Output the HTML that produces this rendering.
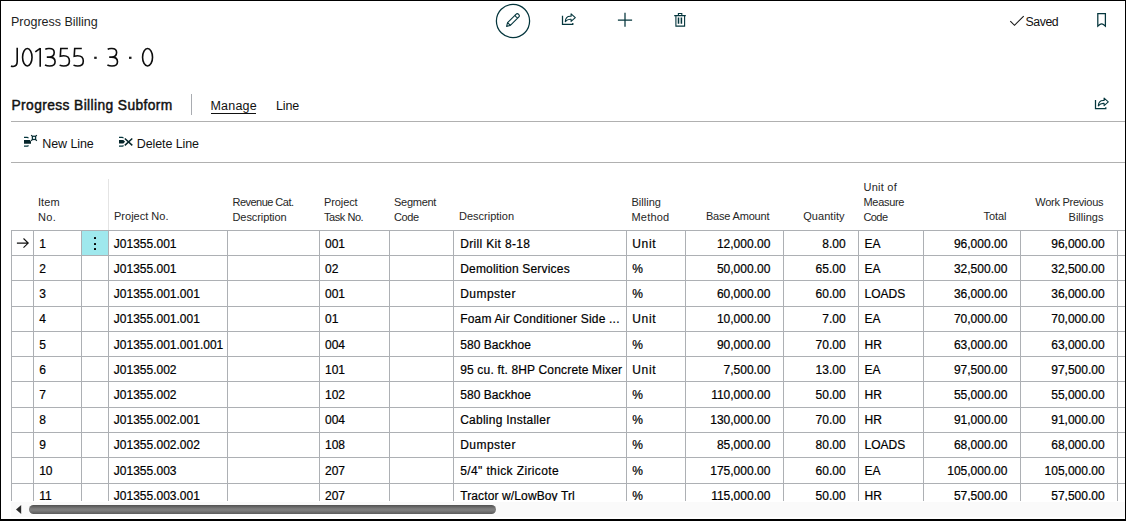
<!DOCTYPE html><html><head><meta charset="utf-8"><style>
*{margin:0;padding:0;box-sizing:border-box}
html,body{width:1126px;height:521px;overflow:hidden;background:#fff}
body{position:relative;font-family:"Liberation Sans",sans-serif;color:#111}
.a{position:absolute;white-space:nowrap;line-height:1}
.hl{position:absolute;height:1px;background:#adb0b4}
.vl{position:absolute;width:1px;background:#adb0b4}
.c{position:absolute;white-space:nowrap;font-size:12.0px;line-height:1;color:#000;-webkit-text-stroke:0.2px #000}
.hd{position:absolute;white-space:nowrap;font-size:11px;line-height:15px;color:#262626}
.r{text-align:right}
</style></head><body>
<div style="position:absolute;left:0;top:0;width:1126px;height:521px;border-top:1px solid #000;border-left:1px solid #000;border-right:1px solid #000;border-bottom:2px solid #000;z-index:50"></div>
<div id="t_pb" class="a" style="left:11px;top:16.3px;font-size:12.5px;color:#1e1e1e;letter-spacing:-0.007px;">Progress Billing</div>
<svg class="a" style="left:0;top:40px" width="170" height="32" viewBox="0 40 170 32"><g stroke="#0d0d0d" stroke-width="1.6" fill="none"><path d="M17.2 47.8 V61.6 C17.2 65.2 15.7 66.45 13.1 66.45 C12.2 66.45 11.5 66.25 11 65.95"/><ellipse cx="27.3" cy="57.25" rx="4.73" ry="8.72" fill="none"/><path d="M40.2 47.9 V66.7 M35.3 51.9 L40.2 48.4"/><path transform="translate(45.00 47.8)" d="M0.3 1.5 C1.4 0.6 2.9 0.75 4.5 0.75 C7.6 0.75 9.2 2.3 9.2 4.8 C9.2 7.6 7.2 9.3 4.2 9.3 H1.8 M4.2 9.3 C7.9 9.3 10.1 11.2 10.1 13.9 C10.1 16.9 7.9 18.2 4.6 18.2 C2.8 18.2 1.2 17.8 0 17.2" fill="none"/><path transform="translate(59.60 47.8)" d="M8.3 0.75 H1.2 L0.7 8.4 C1.7 8.1 2.8 7.9 4 7.9 C7.6 7.9 9.8 10 9.8 13.1 C9.8 16.3 7.6 18.2 4.2 18.2 C2.6 18.2 1.2 17.9 0 17.3" fill="none"/><path transform="translate(73.50 47.8)" d="M8.3 0.75 H1.2 L0.7 8.4 C1.7 8.1 2.8 7.9 4 7.9 C7.6 7.9 9.8 10 9.8 13.1 C9.8 16.3 7.6 18.2 4.2 18.2 C2.6 18.2 1.2 17.9 0 17.3" fill="none"/><path transform="translate(107.40 47.8)" d="M0.3 1.5 C1.4 0.6 2.9 0.75 4.5 0.75 C7.6 0.75 9.2 2.3 9.2 4.8 C9.2 7.6 7.2 9.3 4.2 9.3 H1.8 M4.2 9.3 C7.9 9.3 10.1 11.2 10.1 13.9 C10.1 16.9 7.9 18.2 4.6 18.2 C2.8 18.2 1.2 17.8 0 17.2" fill="none"/><ellipse cx="147.55" cy="57.25" rx="4.98" ry="8.72" fill="none"/></g><rect x="94.2" y="56.7" width="2.5" height="2.2" fill="#1a1a1a"/><rect x="129" y="56.7" width="2.5" height="2.2" fill="#1a1a1a"/></svg>
<svg class="a" style="left:0;top:0" width="1126" height="45" viewBox="0 0 1126 45">
<circle cx="513" cy="21" r="16.6" fill="none" stroke="#05363d" stroke-width="1.25"/>
<g transform="translate(506.6 26.4) rotate(-45)">
<path d="M0 0 L3.3 -1.95 H15.1 A1.95 1.95 0 0 1 15.1 1.95 H3.3 Z M3.3 -1.95 V1.95 M14.3 -1.95 A0.8 1.95 0 0 0 14.3 1.95" fill="none" stroke="#05363d" stroke-width="1.1" stroke-linejoin="round"/>
</g>
<path d="M562.5 15.8 V24.3 H572.8 V23" fill="none" stroke="#05363d" stroke-width="1.25"/>
<path d="M565.3 21.6 C565.5 18.2 567.2 16.3 570.2 16.3 H571.1 V13.9 L575.3 17.7 L571.1 21.4 V19.2 H570.2 C567.7 19.2 566.4 20.3 565.3 21.6 Z" fill="none" stroke="#05363d" stroke-width="1.1" stroke-linejoin="round"/>
<path d="M625 12.8 V26.8 M617.9 20 H632.1" stroke="#05363d" stroke-width="1.25"/>
<path d="M674.2 15.6 H685.8 M678.4 15.6 V13.5 H681.8 V15.6 M675.9 15.6 V26.1 H684.6 V15.6" fill="none" stroke="#05363d" stroke-width="1.1"/>
<path d="M678.5 17.6 V23.8 M681.4 17.6 V23.8" stroke="#05363d" stroke-width="1.5"/>
<path d="M1010.3 21.2 L1014.5 25.3 L1023.7 16.1" fill="none" stroke="#1a1a1a" stroke-width="1.15"/>
<path d="M1097.8 13.6 H1105.4 V26.2 L1103.4 24.6 Q1101.6 23.2 1099.8 24.6 L1097.8 26.2 Z" fill="none" stroke="#05363d" stroke-width="1.25" stroke-linejoin="miter"/>
</svg>
<div id="t_saved" class="a" style="left:1025.5px;top:15.7px;font-size:12.3px;color:#111;letter-spacing:-0.425px;">Saved</div>
<div id="t_sub" class="a" style="left:11.5px;top:98.6px;font-size:13.8px;color:#111;-webkit-text-stroke:0.45px #111;letter-spacing:0.391px;">Progress Billing Subform</div>
<div style="position:absolute;left:191px;top:94px;width:1px;height:21px;background:#a9acb1"></div>
<div id="t_manage" class="a" style="left:210.5px;top:100px;font-size:12.5px;color:#111;letter-spacing:0.200px;">Manage</div>
<div style="position:absolute;left:211px;top:113px;width:45px;height:1.3px;background:#111"></div>
<div id="t_line" class="a" style="left:276px;top:100px;font-size:12.5px;color:#111;letter-spacing:-0.167px;">Line</div>
<svg class="a" style="left:1088px;top:92px" width="24" height="22" viewBox="1088 92 24 22">
<path d="M1095.5 100 V108.5 H1105.8 V107.2" fill="none" stroke="#05363d" stroke-width="1.25"/>
<path d="M1098.3 105.8 C1098.5 102.4 1100.2 100.5 1103.2 100.5 H1104.1 V98.1 L1108.3 101.9 L1104.1 105.6 V103.4 H1103.2 C1100.7 103.4 1099.4 104.5 1098.3 105.8 Z" fill="none" stroke="#05363d" stroke-width="1.1" stroke-linejoin="round"/>
</svg>
<div class="hl" style="left:11px;top:121px;width:1114px;background:#b0b0b0"></div>
<svg class="a" style="left:18px;top:128px" width="120" height="24" viewBox="18 128 120 24">
<path d="M24 137.4 H27.2 Q28.2 137.4 28.2 138.3" fill="none" stroke="#05363d" stroke-width="1.3"/>
<path d="M24 146.2 H27.2 Q28.2 146.2 28.2 145.3" fill="none" stroke="#05363d" stroke-width="1.3"/>
<path d="M24 140 H29.8 L31 141.2 V143.7 H24 Z" fill="#06252a"/>
<circle cx="34" cy="137.9" r="1.75" fill="none" stroke="#05363d" stroke-width="1.3"/>
<path d="M31.2 135.1 L32.8 136.7 M36.8 135.1 L35.2 136.7 M31.2 140.7 L32.8 139.1 M36.8 140.7 L35.2 139.1" stroke="#06252a" stroke-width="1.3"/>
<path d="M119 137.3 H122.3 Q123.2 137.3 123.2 138.2" fill="none" stroke="#05363d" stroke-width="1.3"/>
<path d="M119 146.2 H122.3 Q123.2 146.2 123.2 145.3" fill="none" stroke="#05363d" stroke-width="1.3"/>
<path d="M119 140 H123.3 L125.1 141.8 L123.3 143.6 H119 Z" fill="#06252a"/>
<path d="M124.8 138.5 L132.3 145.4 M132.3 138.5 L124.8 145.4" stroke="#06252a" stroke-width="1.5"/>
</svg>
<div id="t_new" class="a" style="left:42.3px;top:138.2px;font-size:12.5px;color:#111;letter-spacing:-0.100px;">New Line</div>
<div id="t_del" class="a" style="left:136.8px;top:138.2px;font-size:12.5px;color:#111;letter-spacing:-0.110px;">Delete Line</div>
<div class="hl" style="left:11px;top:162px;width:1114px;background:#b0b0b0"></div>
<div id="h_item_0" class="hd" style="left:38px;top:194.5px;letter-spacing:0.067px;">Item</div>
<div id="h_item_1" class="hd" style="left:38px;top:209.5px;letter-spacing:0.350px;">No.</div>
<div id="h_proj_0" class="hd" style="left:114px;top:208.7px;letter-spacing:0.010px;">Project No.</div>
<div id="h_rev_0" class="hd" style="left:232.5px;top:194.5px;letter-spacing:-0.527px;">Revenue Cat.</div>
<div id="h_rev_1" class="hd" style="left:232.5px;top:209.5px;letter-spacing:-0.090px;">Description</div>
<div id="h_task_0" class="hd" style="left:324px;top:194.5px;letter-spacing:-0.100px;">Project</div>
<div id="h_task_1" class="hd" style="left:324px;top:209.5px;letter-spacing:-0.457px;">Task No.</div>
<div id="h_seg_0" class="hd" style="left:394px;top:194.5px;letter-spacing:-0.267px;">Segment</div>
<div id="h_seg_1" class="hd" style="left:394px;top:209.5px;letter-spacing:-0.367px;">Code</div>
<div id="h_desc_0" class="hd" style="left:459px;top:208.7px;">Description</div>
<div id="h_bill_0" class="hd" style="left:631.5px;top:194.5px;letter-spacing:0.017px;">Billing</div>
<div id="h_bill_1" class="hd" style="left:631.5px;top:209.5px;letter-spacing:0.180px;">Method</div>
<div id="h_base_0" class="hd r" style="right:356.69px;top:208.7px;letter-spacing:-0.190px;">Base Amount</div>
<div id="h_qty_0" class="hd r" style="right:281.46px;top:208.7px;letter-spacing:0.043px;">Quantity</div>
<div id="h_uom_0" class="hd" style="left:863.5px;top:179.5px;letter-spacing:0.233px;">Unit of</div>
<div id="h_uom_1" class="hd" style="left:863.5px;top:194.5px;letter-spacing:-0.317px;">Measure</div>
<div id="h_uom_2" class="hd" style="left:863.5px;top:209.5px;letter-spacing:-0.600px;">Code</div>
<div id="h_total_0" class="hd r" style="right:119.55px;top:208.7px;letter-spacing:-0.050px;">Total</div>
<div id="h_work_0" class="hd r" style="right:22.76px;top:194.5px;letter-spacing:-0.258px;">Work Previous</div>
<div id="h_work_1" class="hd r" style="right:22.49px;top:209.5px;letter-spacing:0.014px;">Billings</div>
<div class="vl" style="left:108px;top:179px;height:51px;background:#e4e4e4"></div>
<div style="position:absolute;left:82px;top:231px;width:26px;height:24px;background:#9fe8ed"></div>
<div style="position:absolute;left:94px;top:237.4px;width:2.1px;height:2.1px;background:#000;border-radius:0.5px"></div>
<div style="position:absolute;left:94px;top:242.7px;width:2.1px;height:2.1px;background:#000;border-radius:0.5px"></div>
<div style="position:absolute;left:94px;top:247.9px;width:2.1px;height:2.1px;background:#000;border-radius:0.5px"></div>
<svg class="a" style="left:12px;top:234px" width="20" height="16" viewBox="12 234 20 16"><path d="M16.9 243.1 H28 M23.5 238.5 L28.2 243.1 L23.5 247.7" fill="none" stroke="#111" stroke-width="1.15"/></svg>
<div style="position:absolute;left:0;top:0;width:1126px;height:501px;overflow:hidden">
<div class="hl" style="left:11px;top:230px;width:1114px"></div>
<div class="hl" style="left:11px;top:255px;width:1114px"></div>
<div class="hl" style="left:11px;top:280px;width:1114px"></div>
<div class="hl" style="left:11px;top:306px;width:1114px"></div>
<div class="hl" style="left:11px;top:331px;width:1114px"></div>
<div class="hl" style="left:11px;top:356px;width:1114px"></div>
<div class="hl" style="left:11px;top:381px;width:1114px"></div>
<div class="hl" style="left:11px;top:407px;width:1114px"></div>
<div class="hl" style="left:11px;top:432px;width:1114px"></div>
<div class="hl" style="left:11px;top:457px;width:1114px"></div>
<div class="hl" style="left:11px;top:483px;width:1114px"></div>
<div class="vl" style="left:11px;top:230px;height:280px"></div>
<div class="vl" style="left:33px;top:230px;height:280px"></div>
<div class="vl" style="left:81px;top:230px;height:280px"></div>
<div class="vl" style="left:108px;top:230px;height:280px"></div>
<div class="vl" style="left:227px;top:230px;height:280px"></div>
<div class="vl" style="left:319px;top:230px;height:280px"></div>
<div class="vl" style="left:389px;top:230px;height:280px"></div>
<div class="vl" style="left:453px;top:230px;height:280px"></div>
<div class="vl" style="left:626px;top:230px;height:280px"></div>
<div class="vl" style="left:685px;top:230px;height:280px"></div>
<div class="vl" style="left:783px;top:230px;height:280px"></div>
<div class="vl" style="left:858px;top:230px;height:280px"></div>
<div class="vl" style="left:923px;top:230px;height:280px"></div>
<div class="vl" style="left:1020px;top:230px;height:280px"></div>
<div class="vl" style="left:1117px;top:230px;height:280px"></div>
<div id="c0_item" class="c" style="left:39.2px;top:237.80px;">1</div>
<div id="c0_proj" class="c" style="left:113.8px;top:237.80px;">J01355.001</div>
<div id="c0_task" class="c" style="left:325px;top:237.80px;">001</div>
<div id="c0_desc" class="c" style="left:460.2px;top:237.80px;letter-spacing:0.346px;">Drill Kit 8-18</div>
<div id="c0_bill" class="c" style="left:632.3px;top:237.80px;letter-spacing:0.633px;">Unit</div>
<div id="c0_base" class="c r" style="right:355.70px;top:237.80px;">12,000.00</div>
<div id="c0_qty" class="c r" style="right:280.40px;top:237.80px;">8.00</div>
<div id="c0_uom" class="c" style="left:864.5px;top:237.80px;">EA</div>
<div id="c0_total" class="c r" style="right:118.70px;top:237.80px;">96,000.00</div>
<div id="c0_work" class="c r" style="right:21.40px;top:237.80px;">96,000.00</div>
<div id="c1_item" class="c" style="left:39.2px;top:263.00px;">2</div>
<div id="c1_proj" class="c" style="left:113.8px;top:263.00px;">J01355.001</div>
<div id="c1_task" class="c" style="left:325px;top:263.00px;">02</div>
<div id="c1_desc" class="c" style="left:460.2px;top:263.00px;letter-spacing:0.189px;">Demolition Services</div>
<div id="c1_bill" class="c" style="left:632.3px;top:263.00px;">%</div>
<div id="c1_base" class="c r" style="right:355.70px;top:263.00px;">50,000.00</div>
<div id="c1_qty" class="c r" style="right:280.40px;top:263.00px;">65.00</div>
<div id="c1_uom" class="c" style="left:864.5px;top:263.00px;">EA</div>
<div id="c1_total" class="c r" style="right:118.70px;top:263.00px;">32,500.00</div>
<div id="c1_work" class="c r" style="right:21.40px;top:263.00px;">32,500.00</div>
<div id="c2_item" class="c" style="left:39.2px;top:288.20px;">3</div>
<div id="c2_proj" class="c" style="left:113.8px;top:288.20px;">J01355.001.001</div>
<div id="c2_task" class="c" style="left:325px;top:288.20px;">001</div>
<div id="c2_desc" class="c" style="left:460.2px;top:288.20px;letter-spacing:0.471px;">Dumpster</div>
<div id="c2_bill" class="c" style="left:632.3px;top:288.20px;">%</div>
<div id="c2_base" class="c r" style="right:355.70px;top:288.20px;">60,000.00</div>
<div id="c2_qty" class="c r" style="right:280.40px;top:288.20px;">60.00</div>
<div id="c2_uom" class="c" style="left:864.5px;top:288.20px;">LOADS</div>
<div id="c2_total" class="c r" style="right:118.70px;top:288.20px;">36,000.00</div>
<div id="c2_work" class="c r" style="right:21.40px;top:288.20px;">36,000.00</div>
<div id="c3_item" class="c" style="left:39.2px;top:313.40px;">4</div>
<div id="c3_proj" class="c" style="left:113.8px;top:313.40px;">J01355.001.001</div>
<div id="c3_task" class="c" style="left:325px;top:313.40px;">01</div>
<div id="c3_desc" class="c" style="left:460.2px;top:313.40px;letter-spacing:0.211px;">Foam Air Conditioner Side ...</div>
<div id="c3_bill" class="c" style="left:632.3px;top:313.40px;letter-spacing:0.633px;">Unit</div>
<div id="c3_base" class="c r" style="right:355.70px;top:313.40px;">10,000.00</div>
<div id="c3_qty" class="c r" style="right:280.40px;top:313.40px;">7.00</div>
<div id="c3_uom" class="c" style="left:864.5px;top:313.40px;">EA</div>
<div id="c3_total" class="c r" style="right:118.70px;top:313.40px;">70,000.00</div>
<div id="c3_work" class="c r" style="right:21.40px;top:313.40px;">70,000.00</div>
<div id="c4_item" class="c" style="left:39.2px;top:338.60px;">5</div>
<div id="c4_proj" class="c" style="left:113.8px;top:338.60px;">J01355.001.001.001</div>
<div id="c4_task" class="c" style="left:325px;top:338.60px;">004</div>
<div id="c4_desc" class="c" style="left:460.2px;top:338.60px;letter-spacing:0.060px;">580 Backhoe</div>
<div id="c4_bill" class="c" style="left:632.3px;top:338.60px;">%</div>
<div id="c4_base" class="c r" style="right:355.70px;top:338.60px;">90,000.00</div>
<div id="c4_qty" class="c r" style="right:280.40px;top:338.60px;">70.00</div>
<div id="c4_uom" class="c" style="left:864.5px;top:338.60px;">HR</div>
<div id="c4_total" class="c r" style="right:118.70px;top:338.60px;">63,000.00</div>
<div id="c4_work" class="c r" style="right:21.40px;top:338.60px;">63,000.00</div>
<div id="c5_item" class="c" style="left:39.2px;top:363.80px;">6</div>
<div id="c5_proj" class="c" style="left:113.8px;top:363.80px;">J01355.002</div>
<div id="c5_task" class="c" style="left:325px;top:363.80px;">101</div>
<div id="c5_desc" class="c" style="left:460.2px;top:363.80px;letter-spacing:0.168px;">95 cu. ft. 8HP Concrete Mixer</div>
<div id="c5_bill" class="c" style="left:632.3px;top:363.80px;letter-spacing:0.633px;">Unit</div>
<div id="c5_base" class="c r" style="right:355.70px;top:363.80px;">7,500.00</div>
<div id="c5_qty" class="c r" style="right:280.40px;top:363.80px;">13.00</div>
<div id="c5_uom" class="c" style="left:864.5px;top:363.80px;">EA</div>
<div id="c5_total" class="c r" style="right:118.70px;top:363.80px;">97,500.00</div>
<div id="c5_work" class="c r" style="right:21.40px;top:363.80px;">97,500.00</div>
<div id="c6_item" class="c" style="left:39.2px;top:389.00px;">7</div>
<div id="c6_proj" class="c" style="left:113.8px;top:389.00px;">J01355.002</div>
<div id="c6_task" class="c" style="left:325px;top:389.00px;">102</div>
<div id="c6_desc" class="c" style="left:460.2px;top:389.00px;letter-spacing:0.060px;">580 Backhoe</div>
<div id="c6_bill" class="c" style="left:632.3px;top:389.00px;">%</div>
<div id="c6_base" class="c r" style="right:355.70px;top:389.00px;">110,000.00</div>
<div id="c6_qty" class="c r" style="right:280.40px;top:389.00px;">50.00</div>
<div id="c6_uom" class="c" style="left:864.5px;top:389.00px;">HR</div>
<div id="c6_total" class="c r" style="right:118.70px;top:389.00px;">55,000.00</div>
<div id="c6_work" class="c r" style="right:21.40px;top:389.00px;">55,000.00</div>
<div id="c7_item" class="c" style="left:39.2px;top:414.20px;">8</div>
<div id="c7_proj" class="c" style="left:113.8px;top:414.20px;">J01355.002.001</div>
<div id="c7_task" class="c" style="left:325px;top:414.20px;">004</div>
<div id="c7_desc" class="c" style="left:460.2px;top:414.20px;letter-spacing:0.244px;">Cabling Installer</div>
<div id="c7_bill" class="c" style="left:632.3px;top:414.20px;">%</div>
<div id="c7_base" class="c r" style="right:355.70px;top:414.20px;">130,000.00</div>
<div id="c7_qty" class="c r" style="right:280.40px;top:414.20px;">70.00</div>
<div id="c7_uom" class="c" style="left:864.5px;top:414.20px;">HR</div>
<div id="c7_total" class="c r" style="right:118.70px;top:414.20px;">91,000.00</div>
<div id="c7_work" class="c r" style="right:21.40px;top:414.20px;">91,000.00</div>
<div id="c8_item" class="c" style="left:39.2px;top:439.40px;">9</div>
<div id="c8_proj" class="c" style="left:113.8px;top:439.40px;">J01355.002.002</div>
<div id="c8_task" class="c" style="left:325px;top:439.40px;">108</div>
<div id="c8_desc" class="c" style="left:460.2px;top:439.40px;letter-spacing:0.471px;">Dumpster</div>
<div id="c8_bill" class="c" style="left:632.3px;top:439.40px;">%</div>
<div id="c8_base" class="c r" style="right:355.70px;top:439.40px;">85,000.00</div>
<div id="c8_qty" class="c r" style="right:280.40px;top:439.40px;">80.00</div>
<div id="c8_uom" class="c" style="left:864.5px;top:439.40px;">LOADS</div>
<div id="c8_total" class="c r" style="right:118.70px;top:439.40px;">68,000.00</div>
<div id="c8_work" class="c r" style="right:21.40px;top:439.40px;">68,000.00</div>
<div id="c9_item" class="c" style="left:39.2px;top:464.60px;">10</div>
<div id="c9_proj" class="c" style="left:113.8px;top:464.60px;">J01355.003</div>
<div id="c9_task" class="c" style="left:325px;top:464.60px;">207</div>
<div id="c9_desc" class="c" style="left:460.2px;top:464.60px;letter-spacing:0.383px;">5/4&quot; thick Ziricote</div>
<div id="c9_bill" class="c" style="left:632.3px;top:464.60px;">%</div>
<div id="c9_base" class="c r" style="right:355.70px;top:464.60px;">175,000.00</div>
<div id="c9_qty" class="c r" style="right:280.40px;top:464.60px;">60.00</div>
<div id="c9_uom" class="c" style="left:864.5px;top:464.60px;">EA</div>
<div id="c9_total" class="c r" style="right:118.70px;top:464.60px;">105,000.00</div>
<div id="c9_work" class="c r" style="right:21.40px;top:464.60px;">105,000.00</div>
<div id="c10_item" class="c" style="left:39.2px;top:489.80px;">11</div>
<div id="c10_proj" class="c" style="left:113.8px;top:489.80px;">J01355.003.001</div>
<div id="c10_task" class="c" style="left:325px;top:489.80px;">207</div>
<div id="c10_desc" class="c" style="left:460.2px;top:489.80px;letter-spacing:0.121px;">Tractor w/LowBoy Trl</div>
<div id="c10_bill" class="c" style="left:632.3px;top:489.80px;">%</div>
<div id="c10_base" class="c r" style="right:355.70px;top:489.80px;">115,000.00</div>
<div id="c10_qty" class="c r" style="right:280.40px;top:489.80px;">50.00</div>
<div id="c10_uom" class="c" style="left:864.5px;top:489.80px;">HR</div>
<div id="c10_total" class="c r" style="right:118.70px;top:489.80px;">57,500.00</div>
<div id="c10_work" class="c r" style="right:21.40px;top:489.80px;">57,500.00</div>
</div>
<div style="position:absolute;left:11px;top:502px;width:1114px;height:15px;background:#fafafa"></div>
<svg class="a" style="left:12px;top:502px" width="14" height="14" viewBox="12 502 14 14"><path d="M16 509.5 L21.2 504.9 V514.1 Z" fill="#2a2a2a"/></svg>
<div style="position:absolute;left:29px;top:505px;width:467px;height:9px;border-radius:4.5px;background:linear-gradient(#505050,#7a7a7a 40%,#808080 55%,#5a5a5a)"></div>
</body></html>
